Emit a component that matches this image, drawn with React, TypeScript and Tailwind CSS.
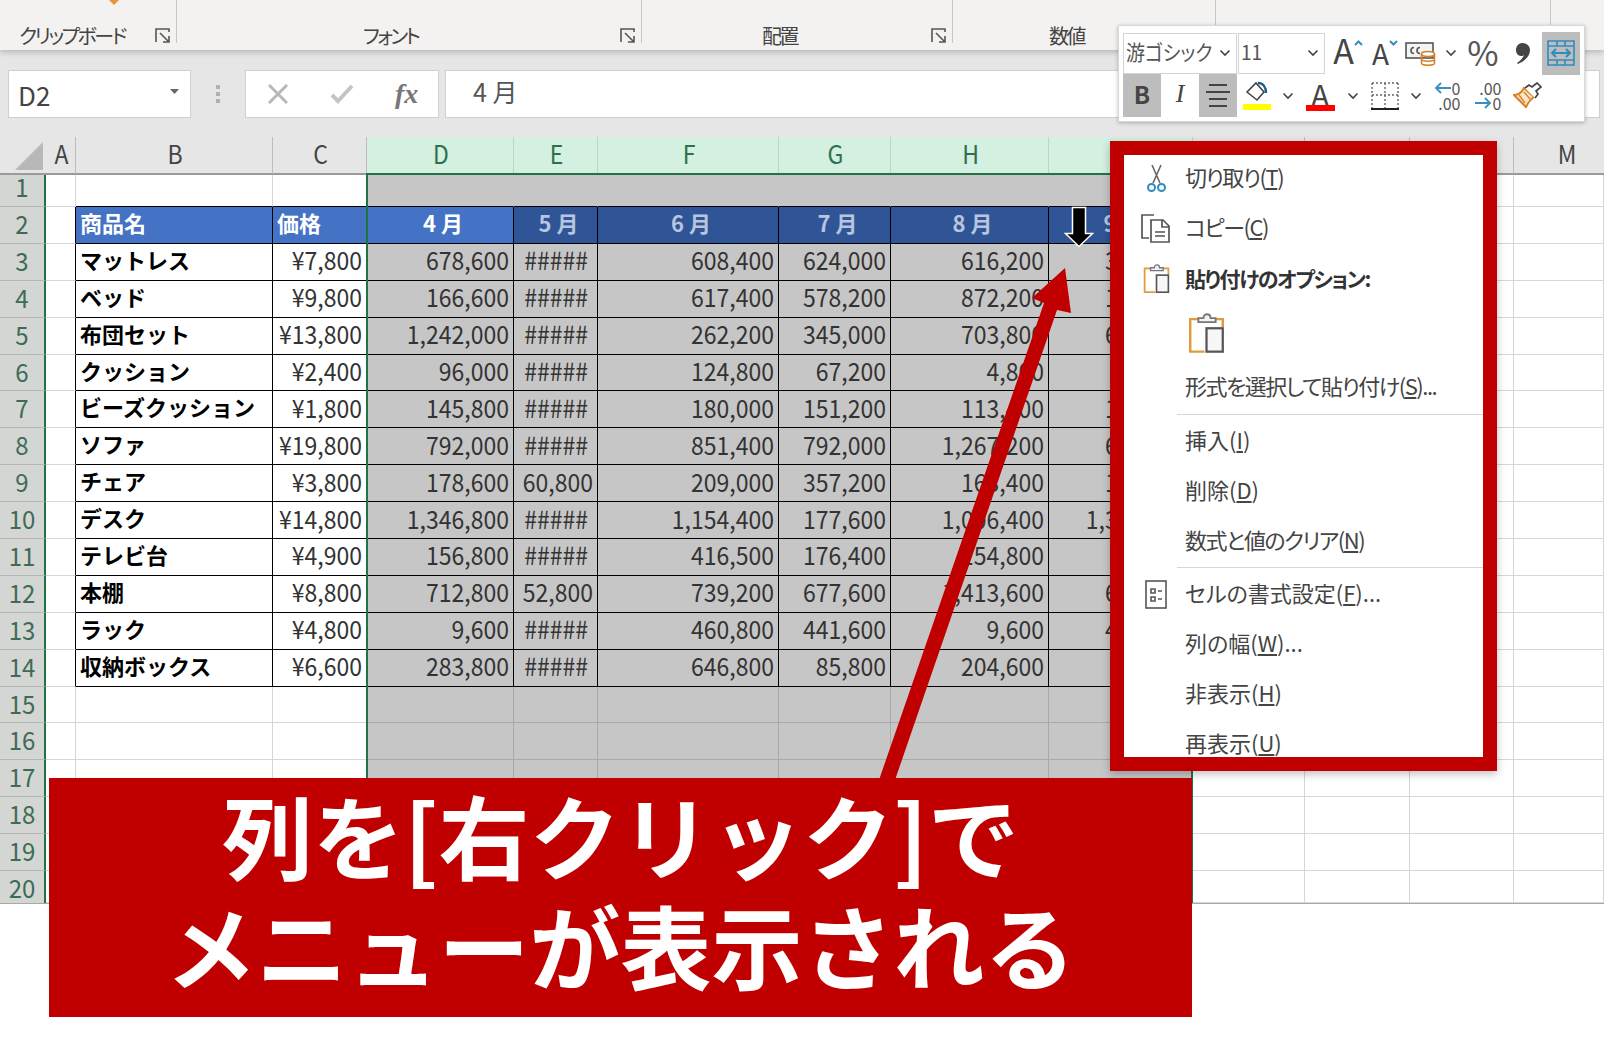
import type { ReactNode } from "react";

const COLUMNS = ["A", "B", "C", "D", "E", "F", "G", "H", "I", "J", "K", "L", "M"];

const TABLE: string[][] = [
  ["商品名", "価格", "4 月", "5 月", "6 月", "7 月", "8 月", "9 月"],
  ["マットレス", "¥7,800", "678,600", "#####", "608,400", "624,000", "616,200", "312,000"],
  ["ベッド", "¥9,800", "166,600", "#####", "617,400", "578,200", "872,200", "124,600"],
  ["布団セット", "¥13,800", "1,242,000", "#####", "262,200", "345,000", "703,800", "634,200"],
  ["クッション", "¥2,400", "96,000", "#####", "124,800", "67,200", "4,800", "72,000"],
  ["ビーズクッション", "¥1,800", "145,800", "#####", "180,000", "151,200", "113,400", "162,000"],
  ["ソファ", "¥19,800", "792,000", "#####", "851,400", "792,000", "1,267,200", "653,400"],
  ["チェア", "¥3,800", "178,600", "60,800", "209,000", "357,200", "163,400", "129,200"],
  ["デスク", "¥14,800", "1,346,800", "#####", "1,154,400", "177,600", "1,006,400", "1,302,400"],
  ["テレビ台", "¥4,900", "156,800", "#####", "416,500", "176,400", "154,800", "58,800"],
  ["本棚", "¥8,800", "712,800", "52,800", "739,200", "677,600", "1,413,600", "633,600"],
  ["ラック", "¥4,800", "9,600", "#####", "460,800", "441,600", "9,600", "432,000"],
  ["収納ボックス", "¥6,600", "283,800", "#####", "646,800", "85,800", "204,600", "85,800"],
];

function Launcher() {
  return (
    <svg width="15" height="15" viewBox="0 0 15 15" fill="none" stroke="#555" strokeWidth="1.6">
      <path d="M1 14V1h13v3" />
      <path d="M5 5l8 8M14 8v6H8" />
    </svg>
  );
}

function Chevron() {
  return (
    <svg width="12" height="8" viewBox="0 0 12 8" fill="none" stroke="#444" strokeWidth="1.6">
      <path d="M1.5 1.5L6 6l4.5-4.5" />
    </svg>
  );
}

function RibbonGroup({ width, label, labelLeft, launcher = true }: { width: string; label: string; labelLeft: string; launcher?: boolean }) {
  return (
    <div className={`${width} ${labelLeft} flex h-[43px] items-end justify-between border-r border-[#c8c6c4] pr-[6px]`}>
      <span className="-mb-[4px] text-[20px] leading-[22px] tracking-[-2.5px] text-[#444] [font-feature-settings:'palt']">{label}</span>
      {launcher && <Launcher />}
    </div>
  );
}

function Ribbon() {
  return (
    <div className="relative z-10 flex h-[50px] bg-[#f3f2f1] shadow-[0_2px_6px_rgba(0,0,0,0.22)]">
      <RibbonGroup width="w-[177px]" labelLeft="pl-[19px]" label="クリップボード" />
      <RibbonGroup width="w-[465px]" labelLeft="pl-[186px]" label="フォント" />
      <RibbonGroup width="w-[311px]" labelLeft="pl-[120px]" label="配置" />
      <RibbonGroup width="w-[263px]" labelLeft="pl-[96px]" label="数値" launcher={false} />
      <RibbonGroup width="w-[335px]" labelLeft="pl-[96px]" label="" launcher={false} />
      <svg className="absolute left-[108px] top-0" width="12" height="5" viewBox="0 0 12 5" fill="#e8923a">
        <path d="M1 0h10L6 5z" />
      </svg>
    </div>
  );
}

function FormulaBar() {
  return (
    <div className="flex h-[87px] items-start bg-[#e6e6e6] pl-[8px] pr-[4px] pt-[20px]">
      <div className="flex h-[48px] w-[183px] items-center justify-between border border-[#cfcfcf] bg-white pl-[9px] pr-[11px]">
        <span className="text-[26px] text-[#444]">D2</span>
        <svg className="-mt-[6px]" width="9" height="5" viewBox="0 0 9 5" fill="#666">
          <path d="M0 0h9L4.5 5z" />
        </svg>
      </div>
      <div className="flex h-[48px] w-[54px] flex-col items-center justify-center gap-[3px]">
        <span className="h-[4px] w-[4px] bg-[#b0b0b0]" />
        <span className="h-[4px] w-[4px] bg-[#b0b0b0]" />
        <span className="h-[4px] w-[4px] bg-[#b0b0b0]" />
      </div>
      <div className="flex h-[48px] w-[194px] items-center border border-[#cfcfcf] bg-white pl-[22px]">
        <svg width="20" height="20" viewBox="0 0 20 20" fill="none" stroke="#b8b8b8" strokeWidth="3">
          <path d="M1 1l18 18M19 1L1 19" />
        </svg>
        <svg className="ml-[42px]" width="24" height="20" viewBox="0 0 24 20" fill="none" stroke="#c4c4c4" strokeWidth="4">
          <path d="M2 11l6 6L22 2" />
        </svg>
        <span className="ml-[41px] font-['Liberation_Serif',serif] text-[28px] font-bold italic leading-none text-[#777]">fx</span>
      </div>
      <div className="ml-[6px] flex h-[48px] flex-1 items-center border border-[#cfcfcf] bg-white pl-[27px]">
        <span className="-mt-[4px] text-[25px] text-[#555]">4 月</span>
      </div>
    </div>
  );
}

function HeaderCell({ index }: { index: number }) {
  const selected = index >= 3 && index <= 8;
  // I to L sit behind the context menu
  const covered = index >= 8 && index <= 11;
  return (
    <div
      className={
        selected
          ? "flex items-center justify-center border-r border-b-2 border-r-[#b9d6c6] border-b-[#8fa89a] bg-[#d3f0e0] pl-[2px] text-[23px] text-[#2f6f4f]"
          : index === 12
            ? "flex items-center justify-center border-b-2 border-b-[#9a9a9a] bg-[#e6e6e6] pl-[16px] text-[23px] text-[#444]"
            : "flex items-center justify-center border-r border-b-2 border-r-[#bdbdbd] border-b-[#9a9a9a] bg-[#e6e6e6] pl-[2px] text-[23px] text-[#444]"
      }
    >
      {!covered && <span className="-translate-y-[1px] scale-y-[1.1] leading-none">{COLUMNS[index]}</span>}
    </div>
  );
}

function cellClasses(col: number, row: number) {
  const selected = col >= 3 && col <= 8;
  const inTable = row >= 2 && row <= 14 && col >= 1 && col <= 8;
  const parts: string[] = ["flex items-center whitespace-nowrap border-r border-b"];

  if (inTable || (col === 0 && row >= 2 && row <= 14)) parts.push("border-r-black");
  else if (row === 1 && selected) parts.push("border-r-[#c6c6c6]");
  else if (selected) parts.push("border-r-[#a9a9a9]");
  else parts.push("border-r-[#d6d6d6]");

  if (inTable || (row === 1 && col >= 1 && col <= 8)) parts.push("border-b-black");
  else if (selected) parts.push("border-b-[#a9a9a9]");
  else parts.push("border-b-[#d6d6d6]");

  if (row === 2 && col >= 1 && col <= 3) parts.push("bg-[#4472c4]");
  else if (row === 2 && selected) parts.push("bg-[#2f5597]");
  else if (selected) parts.push("bg-[#c6c6c6]");
  else parts.push("bg-white");
  return parts.join(" ");
}

function DataCell({ col, row }: { col: number; row: number }) {
  const text = row >= 2 && row <= 14 && col >= 1 && col <= 8 ? TABLE[row - 2][col - 1] : "";
  let inner: ReactNode = null;
  if (text && row === 2 && col <= 2) {
    inner = <span className="-translate-y-[3px] pl-[4px] text-[22px] font-bold leading-none text-white">{text}</span>;
  } else if (text && row === 2) {
    inner = (
      <span className={col === 3 ? "w-full -translate-y-[3px] pl-[6px] text-center text-[22px] font-bold leading-none text-white" : "w-full -translate-y-[3px] pl-[6px] text-center text-[22px] font-bold leading-none text-[#b7c5df]"}>
        {text}
      </span>
    );
  } else if (text && col === 1) {
    inner = <span className="-translate-y-[3px] pl-[4px] text-[22px] font-bold leading-none text-black">{text}</span>;
  } else if (text) {
    inner = (
      <span className={col === 4 && text === "#####" ? "w-full -translate-y-[2px] scale-y-[1.1] pr-[9px] text-right text-[23px] leading-none text-[#333]" : "w-full -translate-y-[2px] scale-y-[1.1] pr-[4px] text-right text-[23px] leading-none text-[#333]"}>
        {text}
      </span>
    );
  }
  return <div className={cellClasses(col, row)}>{inner}</div>;
}

function RowLabel({ row }: { row: number }) {
  return (
    <div
      className={
        row === 1
          ? "flex items-center justify-center border-b border-r-2 border-b-[#b4b8b4] border-r-[#217346] bg-[#d3d6d3] pb-[5px] text-[24px] text-[#3e6b58]"
          : row === 20
            ? "flex items-center justify-center border-r-2 border-r-[#217346] bg-[#d3d6d3] pt-[4px] text-[24px] text-[#3e6b58]"
            : "flex items-center justify-center border-b border-r-2 border-b-[#b4b8b4] border-r-[#217346] bg-[#d3d6d3] text-[24px] text-[#3e6b58]"
      }
    >
      <span className="-translate-y-[2px] scale-y-[1.06] leading-none">{row}</span>
    </div>
  );
}

function Sheet() {
  const rows = Array.from({ length: 20 }, (_, i) => i + 1);
  return (
    <div className="relative grid grid-cols-[46px_30px_197px_94px_147px_84px_181px_112px_158px_144px_112px_105px_104px_90px] grid-rows-[37.5px_32.5px_repeat(18,36.9px)_32px] border-b border-[#a8a8a8]">
      <div className="flex items-end justify-end border-b-2 border-[#9a9a9a] bg-[#e6e6e6] pb-[3px] pr-[3px]">
        <svg width="28" height="28" viewBox="0 0 28 28" fill="#b8b8b8">
          <path d="M28 0v28H0z" />
        </svg>
      </div>
      {COLUMNS.map((_, i) => (
        <HeaderCell key={i} index={i} />
      ))}
      {rows.map((row) => (
        <div key={row} className="contents">
          <RowLabel row={row} />
          {COLUMNS.map((_, col) => (
            <DataCell key={col} col={col} row={row} />
          ))}
        </div>
      ))}
      {/* selection outline for columns D:I */}
      <div className="pointer-events-none absolute left-[366px] top-[36px] h-[730px] w-[827px] border-x-2 border-t-2 border-[#217346]" />
    </div>
  );
}

function ToolButton({ width, active, children }: { width: string; active?: boolean; children: ReactNode }) {
  return (
    <div className={`${width} ${active ? "bg-[#bdbdbd]" : ""} flex h-[43px] shrink-0 items-center justify-center`}>{children}</div>
  );
}

function Combo({ width, label }: { width: string; label: string }) {
  return (
    <div className={`${width} flex h-[41px] shrink-0 items-center justify-between border border-[#d4d4d4] pl-[2px] pr-[5px]`}>
      <span className="-translate-y-[3px] scale-y-[1.1] whitespace-nowrap text-[19px] leading-none text-[#555] [font-feature-settings:'palt']">{label}</span>
      <Chevron />
    </div>
  );
}

function MiniToolbar() {
  return (
    <div className="absolute left-[1118px] top-[25px] z-20 h-[97px] w-[467px] border border-[#d8d8d8] bg-white pl-[4px] pt-[6px] shadow-[0_1px_4px_rgba(0,0,0,0.25)]">
      <div className="flex h-[42px] items-center">
        <Combo width="w-[114px]" label="游ゴシック" />
        <div className="w-[1px]" />
        <Combo width="w-[87px]" label="11" />
        <ToolButton width="w-[38px]">
          <span className="ml-[8px] -translate-y-[3px] text-[34px] leading-none text-[#444]">A</span>
          <svg className="-mt-[20px]" width="9" height="6" viewBox="0 0 9 6" fill="none" stroke="#3a8dbf" strokeWidth="2">
            <path d="M1 5l3.5-3.5L8 5" />
          </svg>
        </ToolButton>
        <ToolButton width="w-[38px]">
          <span className="ml-[6px] text-[28px] leading-none text-[#444]">A</span>
          <svg className="-mt-[20px]" width="9" height="6" viewBox="0 0 9 6" fill="none" stroke="#3a8dbf" strokeWidth="2">
            <path d="M1 1l3.5 3.5L8 1" />
          </svg>
        </ToolButton>
        <ToolButton width="w-[38px]">
          <svg width="31" height="26" viewBox="0 0 31 26" fill="none">
            <rect x="1" y="3" width="27" height="15" stroke="#555" strokeWidth="1.6" fill="#f4f4f4" />
            <path d="M9 7.5a3 3 0 1 0 0 6M15 7.5a3 3 0 1 0 0 6" stroke="#555" strokeWidth="1.6" />
            <ellipse cx="23" cy="14" rx="6.5" ry="2.5" stroke="#d9822b" strokeWidth="1.6" fill="#fff" />
            <path d="M16.5 14v9c0 3 13 3 13 0v-9M16.5 19c0 3 13 3 13 0" stroke="#d9822b" strokeWidth="1.6" fill="none" />
          </svg>
        </ToolButton>
        <ToolButton width="w-[23px]">
          <Chevron />
        </ToolButton>
        <ToolButton width="w-[42px]">
          <span className="-translate-y-[1px] text-[34px] leading-none text-[#555]">%</span>
        </ToolButton>
        <ToolButton width="w-[38px]">
          <svg width="14" height="21" viewBox="0 0 14 21" fill="#444">
            <path d="M6 0c5 0 8 3 8 7 0 6-5 11-12 14l-1-1c4-3 6-5 7-8-1 1-2 1-3 1C2 13 0 10 0 7c0-4 3-7 6-7z" />
          </svg>
        </ToolButton>
        <ToolButton width="w-[38px]" active>
          <svg width="28" height="28" viewBox="0 0 28 28" fill="none" stroke="#2f8cc0" strokeWidth="1.6">
            <path d="M1 2h26v24H1zM1 7h26M1 21h26M10 2v5M18 2v5M10 21v5M18 21v5" />
            <path d="M5 14h18M9 10l-4 4 4 4M19 10l4 4-4 4" strokeWidth="2" />
          </svg>
        </ToolButton>
      </div>
      <div className="flex h-[43px] items-center">
        <ToolButton width="w-[38px]" active>
          <span className="-translate-y-[2px] text-[24px] font-bold leading-none text-[#444]">B</span>
        </ToolButton>
        <ToolButton width="w-[38px]">
          <span className="-translate-y-[2px] font-['Liberation_Serif',serif] text-[26px] italic leading-none text-[#444]">I</span>
        </ToolButton>
        <ToolButton width="w-[38px]" active>
          <svg className="-translate-y-[1px]" width="26" height="24" viewBox="0 0 26 24" fill="none" stroke="#444" strokeWidth="2">
            <path d="M4 2h18M1 9h24M4 16h18M4 23h18" />
          </svg>
        </ToolButton>
        <ToolButton width="w-[40px]">
          <svg width="30" height="30" viewBox="0 0 30 30" fill="none">
            <path d="M5 11L14 2l8 9-7 8z" stroke="#444" strokeWidth="1.6" />
            <path d="M16 2c5 0 8 4 8 10" stroke="#1f5f8f" strokeWidth="2.4" />
            <rect x="1" y="23" width="28" height="6" fill="#ffff00" />
          </svg>
        </ToolButton>
        <ToolButton width="w-[21px]">
          <Chevron />
        </ToolButton>
        <ToolButton width="w-[44px]">
          <div className="flex w-[29px] flex-col items-center">
            <span className="-mb-[3px] text-[30px] leading-[28px] text-[#444]">A</span>
            <span className="h-[6px] w-[29px] bg-[#ff0000]" />
          </div>
        </ToolButton>
        <ToolButton width="w-[21px]">
          <Chevron />
        </ToolButton>
        <ToolButton width="w-[43px]">
          <svg width="28" height="28" viewBox="0 0 28 28" fill="none" stroke="#666" strokeWidth="1.4" strokeDasharray="2 2">
            <path d="M1 1h26M1 1v25M27 1v25M1 13h26M14 1v25" />
            <path d="M0 27h28" stroke="#222" strokeWidth="2" strokeDasharray="none" />
          </svg>
        </ToolButton>
        <ToolButton width="w-[20px]">
          <Chevron />
        </ToolButton>
        <ToolButton width="w-[42px]">
          <div className="flex flex-col items-end text-[16px] leading-[15px] text-[#555]">
            <div className="flex items-center gap-[1px]">
              <svg width="17" height="12" viewBox="0 0 17 12" fill="none" stroke="#3a8dbf" strokeWidth="1.8">
                <path d="M17 6H2M7 1L2 6l5 5" />
              </svg>
              <span>0</span>
            </div>
            <span>.00</span>
          </div>
        </ToolButton>
        <ToolButton width="w-[40px]">
          <div className="flex flex-col items-end text-[16px] leading-[15px] text-[#555]">
            <span>.00</span>
            <div className="flex items-center gap-[1px]">
              <svg width="17" height="12" viewBox="0 0 17 12" fill="none" stroke="#3a8dbf" strokeWidth="1.8">
                <path d="M0 6h15M10 1l5 5-5 5" />
              </svg>
              <span>0</span>
            </div>
          </div>
        </ToolButton>
        <ToolButton width="w-[38px]">
          <svg width="29" height="27" viewBox="0 0 29 27" fill="none">
            <path d="M1 13c4 0 8-3 10-7l10 9c-3 2-6 6-8 10z" stroke="#d9822b" strokeWidth="2" fill="#fbe6c8" />
            <path d="M6 13l6 8M11 10l6 7" stroke="#d9822b" strokeWidth="1.4" />
            <path d="M12 6l4-3 3 2 5-4 4 4-5 4 2 3-3 4" stroke="#444" strokeWidth="1.7" fill="#fff" />
          </svg>
        </ToolButton>
      </div>
    </div>
  );
}

function MenuItem({ height = "h-[50px]", tight, bold, icon, children }: { height?: string; tight?: boolean; bold?: boolean; icon?: ReactNode; children?: ReactNode }) {
  return (
    <div className={`${height} relative flex shrink-0 items-center pl-[61px]`}>
      {icon && <div className="absolute left-[16px] flex w-[32px] items-center justify-center">{icon}</div>}
      <span
        className={
          bold
            ? "text-[21px] font-bold tracking-[-1.5px] text-[#333] [font-feature-settings:'palt']"
            : tight
              ? "-translate-y-[2px] text-[22px] tracking-[-1.5px] text-[#444] [font-feature-settings:'palt']"
              : "-translate-y-[2px] text-[22px] text-[#444] [font-feature-settings:'palt']"
        }
      >
        {children}
      </span>
    </div>
  );
}

function PasteIcon({ size }: { size: number }) {
  return (
    <svg width={size} height={size * 1.1} viewBox="0 0 36 40" fill="none">
      <path d="M10 6H2v32h14" stroke="#e29a3e" strokeWidth="2.4" />
      <path d="M27 6h7v8" stroke="#e29a3e" strokeWidth="2.4" />
      <path d="M10 9V5h5c0-5 7-5 7 0h5v4z" stroke="#777" strokeWidth="1.8" fill="#f2f2f2" />
      <rect x="18" y="15" width="16" height="23" stroke="#555" strokeWidth="2.2" fill="#f7f7f7" />
    </svg>
  );
}

function ContextMenu() {
  return (
    <div className="absolute left-[1110px] top-[141px] z-20 flex h-[630px] w-[387px] flex-col overflow-hidden border-[14px] border-[#c00000] bg-white shadow-[0_3px_8px_rgba(0,0,0,0.25)]">
      <div className="-mt-[2px] flex flex-col">
        <MenuItem
          tight
          icon={
            <svg width="25" height="29" viewBox="0 0 25 29" fill="none">
              <path d="M8 1l8 18M17 1L9 19" stroke="#666" strokeWidth="1.6" />
              <circle cx="7.5" cy="23.5" r="3.5" stroke="#2f8cc0" strokeWidth="2" />
              <circle cx="17.5" cy="23.5" r="3.5" stroke="#2f8cc0" strokeWidth="2" />
            </svg>
          }
        >
          切り取り(<span className="underline">T</span>)
        </MenuItem>
        <MenuItem
          tight
          icon={
            <svg width="30" height="29" viewBox="0 0 30 29" fill="none" stroke="#555" strokeWidth="1.7">
              <path d="M13 1H1v23h7" />
              <path d="M10 6h12l6 6v16H10z" />
              <path d="M21 6v7h7M14 18h10M14 22h10" />
            </svg>
          }
        >
          コピー(<span className="underline">C</span>)
        </MenuItem>
        <MenuItem height="h-[52px]" bold icon={<PasteIcon size={27} />}>
          貼り付けのオプション:
        </MenuItem>
        <div className="flex h-[57px] shrink-0 items-center pl-[64px]">
          <PasteIcon size={37} />
        </div>
        <MenuItem tight>
          形式を選択して貼り付け(<span className="underline">S</span>)...
        </MenuItem>
        <div className="ml-[53px] flex h-[4px] shrink-0 items-center">
          <div className="h-[1px] w-full bg-[#d6d6d6]" />
        </div>
        <MenuItem>
          挿入(<span className="underline">I</span>)
        </MenuItem>
        <MenuItem>
          削除(<span className="underline">D</span>)
        </MenuItem>
        <MenuItem tight>
          数式と値のクリア(<span className="underline">N</span>)
        </MenuItem>
        <div className="ml-[53px] flex h-[3px] shrink-0 items-center">
          <div className="h-[1px] w-full bg-[#d6d6d6]" />
        </div>
        <MenuItem
          icon={
            <svg width="22" height="29" viewBox="0 0 22 29" fill="none" stroke="#555" strokeWidth="1.6">
              <rect x="1" y="1" width="20" height="27" />
              <path d="M6 9h4v4H6zM6 17h4v4H6zM13 11h4M13 19h4" />
            </svg>
          }
        >
          セルの書式設定(<span className="underline">F</span>)...
        </MenuItem>
        <MenuItem>
          列の幅(<span className="underline">W</span>)...
        </MenuItem>
        <MenuItem>
          非表示(<span className="underline">H</span>)
        </MenuItem>
        <MenuItem>
          再表示(<span className="underline">U</span>)
        </MenuItem>
      </div>
    </div>
  );
}

function Annotations() {
  return (
    <>
      {/* arrow pointing at the column header */}
      <svg className="pointer-events-none absolute left-0 top-0 z-10" width="1604" height="1064" viewBox="0 0 1604 1064">
        <path d="M879 780L1044 303 1032 298 1065 268 1071 313 1057 310 895 780z" fill="#c00000" />
        <path d="M1072.5 207.5h13v26h7l-13.5 13-13.5-13h7z" fill="#000" stroke="#fff" strokeWidth="1.5" />
      </svg>
      <div className="absolute left-[49px] top-[778px] z-10 flex h-[239px] w-[1143px] flex-col items-center justify-center bg-[#c00000] pb-[19px] text-[91px] font-bold leading-[110px] text-white">
        <span>列を[右クリック]で</span>
        <span>メニューが表示される</span>
      </div>
    </>
  );
}

export default function App() {
  return (
    <div className="relative h-[1064px] w-[1604px] overflow-hidden bg-white font-['Noto_Sans_CJK_JP',sans-serif]">
      <Ribbon />
      <FormulaBar />
      <Sheet />
      <Annotations />
      <MiniToolbar />
      <ContextMenu />
    </div>
  );
}
